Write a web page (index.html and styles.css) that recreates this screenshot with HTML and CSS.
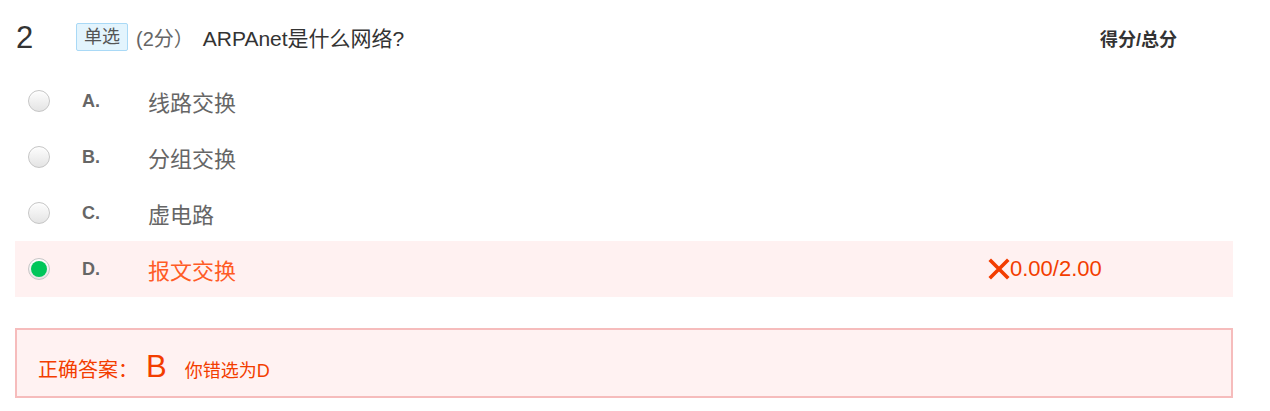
FILE: index.html
```html
<!DOCTYPE html>
<html lang="zh-CN">
<head>
<meta charset="utf-8">
<title>ARPAnet</title>
<link rel="stylesheet" href="styles.css">
</head>
<body>
<div class="question">
  <div class="q-head">
    <span class="q-num">2</span>
    <span class="q-type">单选</span>
    <span class="q-score">(2分）</span>
    <span class="q-title">ARPAnet是什么网络?</span>
    <span class="q-total">得分/总分</span>
  </div>
  <ul class="options">
    <li class="opt"><span class="radio"></span><span class="opt-key">A.</span><span class="opt-text">线路交换</span><span class="opt-score"></span></li>
    <li class="opt"><span class="radio"></span><span class="opt-key">B.</span><span class="opt-text">分组交换</span><span class="opt-score"></span></li>
    <li class="opt"><span class="radio"></span><span class="opt-key">C.</span><span class="opt-text">虚电路</span><span class="opt-score"></span></li>
    <li class="opt opt-wrong"><span class="radio radio-on"></span><span class="opt-key">D.</span><span class="opt-text">报文交换</span><span class="opt-score"><svg class="x-icon" viewBox="0 0 22 22" width="22" height="22"><path d="M3 3 L19 19 M19 3 L3 19" stroke="#f33d00" stroke-width="3.6" stroke-linecap="square" fill="none"/></svg><span>0.00/2.00</span></span></li>
  </ul>
  <div class="answer">
    <span class="ans-label">正确答案：</span><span class="ans-key">B</span><span class="ans-mine">你错选为D</span>
  </div>
</div>
</body>
</html>
```
FILE: styles.css
```css
* { box-sizing: border-box; }
html, body { margin: 0; padding: 0; background: #fff; }
body {
  font-family: "Liberation Sans", "Noto Sans CJK SC", Arial, sans-serif;
  color: #333;
}
.question {
  width: 1233px;
  padding-left: 15px;
}
.q-head {
  display: flex;
  align-items: center;
  height: 48px;
  margin-top: 13px;
}
.q-num {
  font-size: 31px;
  color: #333;
  width: 61px;
  padding-left: 1px;
  line-height: 1;
}
.q-type {
  font-size: 18px;
  color: #555;
  background: #e3f4fd;
  border: 1px solid #a9d9f6;
  border-radius: 2px;
  height: 28px;
  line-height: 26px;
  padding: 0 7px;
  margin-right: 8px;
}
.q-score {
  font-size: 20px;
  color: #666;
  margin-right: 9px;
}
.q-title {
  font-size: 21px;
  color: #333;
  flex: 1;
}
.q-total {
  font-size: 18px;
  font-weight: bold;
  color: #333;
  width: 133px;
  padding-top: 2px;
}
.options {
  list-style: none;
  margin: 12px 0 0;
  padding: 0;
}
.opt {
  display: flex;
  align-items: center;
  height: 56px;
  padding-left: 13px;
}
.opt-wrong { background: #fff1f1; }
.radio {
  width: 22px;
  height: 22px;
  border-radius: 50%;
  border: 1px solid #c6c6c6;
  background: linear-gradient(#fdfdfd, #e4e4e4);
  box-shadow: inset 0 1px 1px rgba(255,255,255,0.8);
  margin-right: 32px;
  position: relative;
}
.radio-on::after {
  content: "";
  position: absolute;
  left: 2px;
  top: 2px;
  width: 16px;
  height: 16px;
  border-radius: 50%;
  background: #00c65a;
}
.opt-key {
  width: 66px;
  font-size: 18px;
  font-weight: bold;
  color: #666;
}
.opt-text {
  flex: 1;
  font-size: 22px;
  color: #666;
}
.opt-wrong .opt-text { color: #ff5b26; }
.opt-score {
  width: 245px;
  display: flex;
  align-items: center;
  font-size: 22px;
  color: #f33d00;
}
.answer {
  margin-top: 31px;
  height: 70px;
  border: 2px solid #f6bcbc;
  background: #fff2f2;
  padding: 19px 0 0 21px;
  display: flex;
  align-items: baseline;
  color: #f33d00;
}
.ans-label { font-size: 20px; }
.ans-key { font-size: 31px; margin: 0 18px 0 8px; }
.ans-mine { font-size: 18px; }
```
